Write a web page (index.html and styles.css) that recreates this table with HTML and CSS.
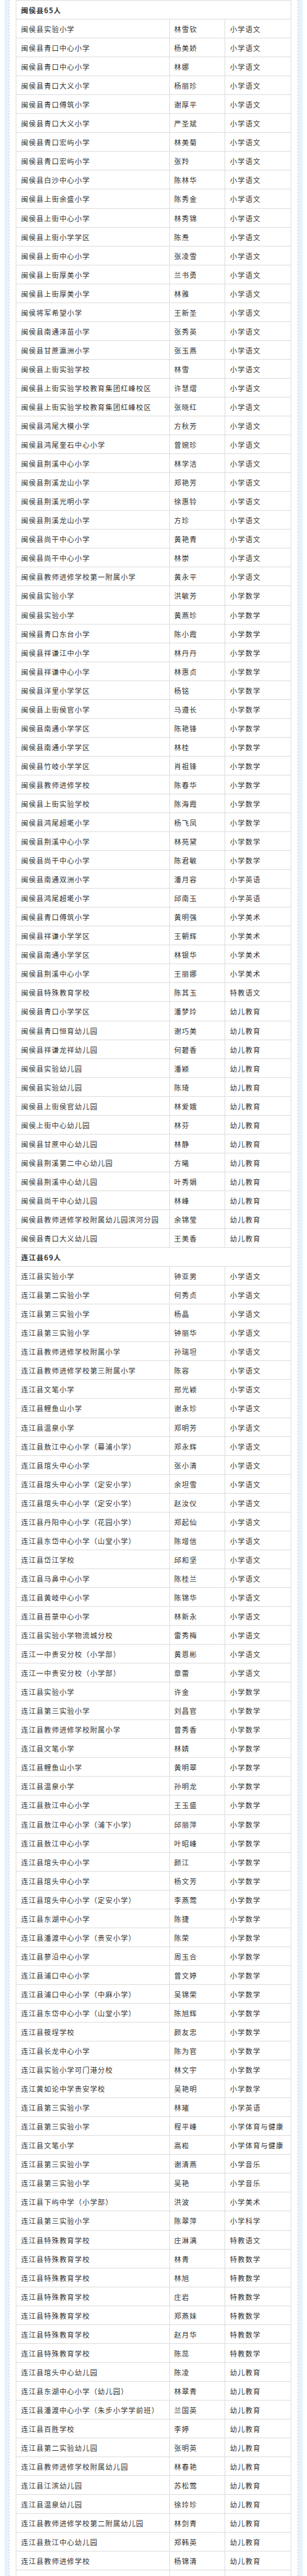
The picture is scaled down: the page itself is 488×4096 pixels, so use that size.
FILE: index.html
```html
<!DOCTYPE html>
<html lang="zh-CN">
<head>
<meta charset="utf-8">
<title>名单</title>
<link rel="stylesheet" href="styles.css">
</head>
<body>
<div class="page">
<div class="frame">
<div class="list">
<div class="row head"><div class="cell">闽侯县65人</div></div>
<div class="row"><div class="cell">闽侯县实验小学</div><div class="cell">林雪钦</div><div class="cell">小学语文</div></div>
<div class="row"><div class="cell">闽侯县青口中心小学</div><div class="cell">杨美娇</div><div class="cell">小学语文</div></div>
<div class="row"><div class="cell">闽侯县青口中心小学</div><div class="cell">林娜</div><div class="cell">小学语文</div></div>
<div class="row"><div class="cell">闽侯县青口大义小学</div><div class="cell">杨丽珍</div><div class="cell">小学语文</div></div>
<div class="row"><div class="cell">闽侯县青口傅筑小学</div><div class="cell">谢厚平</div><div class="cell">小学语文</div></div>
<div class="row"><div class="cell">闽侯县青口大义小学</div><div class="cell">严圣斌</div><div class="cell">小学语文</div></div>
<div class="row"><div class="cell">闽侯县青口宏屿小学</div><div class="cell">林美菊</div><div class="cell">小学语文</div></div>
<div class="row"><div class="cell">闽侯县青口宏屿小学</div><div class="cell">张羚</div><div class="cell">小学语文</div></div>
<div class="row"><div class="cell">闽侯县白沙中心小学</div><div class="cell">陈林华</div><div class="cell">小学语文</div></div>
<div class="row"><div class="cell">闽侯县上街余盛小学</div><div class="cell">陈秀金</div><div class="cell">小学语文</div></div>
<div class="row"><div class="cell">闽侯县上街中心小学</div><div class="cell">林秀锦</div><div class="cell">小学语文</div></div>
<div class="row"><div class="cell">闽侯县上街小学学区</div><div class="cell">陈焘</div><div class="cell">小学语文</div></div>
<div class="row"><div class="cell">闽侯县上街中心小学</div><div class="cell">张凌雪</div><div class="cell">小学语文</div></div>
<div class="row"><div class="cell">闽侯县上街厚美小学</div><div class="cell">兰书勇</div><div class="cell">小学语文</div></div>
<div class="row"><div class="cell">闽侯县上街厚美小学</div><div class="cell">林雅</div><div class="cell">小学语文</div></div>
<div class="row"><div class="cell">闽侯将军希望小学</div><div class="cell">王新圣</div><div class="cell">小学语文</div></div>
<div class="row"><div class="cell">闽侯县南通泽苗小学</div><div class="cell">张秀英</div><div class="cell">小学语文</div></div>
<div class="row"><div class="cell">闽侯县甘蔗瀛洲小学</div><div class="cell">张玉燕</div><div class="cell">小学语文</div></div>
<div class="row"><div class="cell">闽侯县上街实验学校</div><div class="cell">林雪</div><div class="cell">小学语文</div></div>
<div class="row"><div class="cell">闽侯县上街实验学校教育集团红峰校区</div><div class="cell">许慧熠</div><div class="cell">小学语文</div></div>
<div class="row"><div class="cell">闽侯县上街实验学校教育集团红峰校区</div><div class="cell">张晓红</div><div class="cell">小学语文</div></div>
<div class="row"><div class="cell">闽侯县鸿尾大模小学</div><div class="cell">方秋芳</div><div class="cell">小学语文</div></div>
<div class="row"><div class="cell">闽侯县鸿尾奎石中心小学</div><div class="cell">曾婉珍</div><div class="cell">小学语文</div></div>
<div class="row"><div class="cell">闽侯县荆溪中心小学</div><div class="cell">林学洁</div><div class="cell">小学语文</div></div>
<div class="row"><div class="cell">闽侯县荆溪龙山小学</div><div class="cell">郑艳芳</div><div class="cell">小学语文</div></div>
<div class="row"><div class="cell">闽侯县荆溪光明小学</div><div class="cell">徐惠铃</div><div class="cell">小学语文</div></div>
<div class="row"><div class="cell">闽侯县荆溪龙山小学</div><div class="cell">方珍</div><div class="cell">小学语文</div></div>
<div class="row"><div class="cell">闽侯县尚干中心小学</div><div class="cell">黄艳青</div><div class="cell">小学语文</div></div>
<div class="row"><div class="cell">闽侯县尚干中心小学</div><div class="cell">林崇</div><div class="cell">小学语文</div></div>
<div class="row"><div class="cell">闽侯县教师进修学校第一附属小学</div><div class="cell">黄永平</div><div class="cell">小学语文</div></div>
<div class="row"><div class="cell">闽侯县实验小学</div><div class="cell">洪敏芳</div><div class="cell">小学数学</div></div>
<div class="row"><div class="cell">闽侯县实验小学</div><div class="cell">黄燕珍</div><div class="cell">小学数学</div></div>
<div class="row"><div class="cell">闽候县青口东台小学</div><div class="cell">陈小霞</div><div class="cell">小学数学</div></div>
<div class="row"><div class="cell">闽侯县祥谦江中小学</div><div class="cell">林丹丹</div><div class="cell">小学数学</div></div>
<div class="row"><div class="cell">闽侯县祥谦中心小学</div><div class="cell">林惠贞</div><div class="cell">小学数学</div></div>
<div class="row"><div class="cell">闽侯县洋里小学学区</div><div class="cell">杨铭</div><div class="cell">小学数学</div></div>
<div class="row"><div class="cell">闽侯县上街侯官小学</div><div class="cell">马遵长</div><div class="cell">小学数学</div></div>
<div class="row"><div class="cell">闽侯县南通小学学区</div><div class="cell">陈艳锋</div><div class="cell">小学数学</div></div>
<div class="row"><div class="cell">闽侯县南通小学学区</div><div class="cell">林桂</div><div class="cell">小学数学</div></div>
<div class="row"><div class="cell">闽侯县竹岐小学学区</div><div class="cell">肖祖锋</div><div class="cell">小学数学</div></div>
<div class="row"><div class="cell">闽侯县教师进修学校</div><div class="cell">陈春华</div><div class="cell">小学数学</div></div>
<div class="row"><div class="cell">闽侯县上街实验学校</div><div class="cell">陈海霞</div><div class="cell">小学数学</div></div>
<div class="row"><div class="cell">闽侯县鸿尾超墘小学</div><div class="cell">杨飞凤</div><div class="cell">小学数学</div></div>
<div class="row"><div class="cell">闽侯县荆溪中心小学</div><div class="cell">林苑黛</div><div class="cell">小学数学</div></div>
<div class="row"><div class="cell">闽侯县尚干中心小学</div><div class="cell">陈君敏</div><div class="cell">小学数学</div></div>
<div class="row"><div class="cell">闽侯县南通双洲小学</div><div class="cell">潘月容</div><div class="cell">小学英语</div></div>
<div class="row"><div class="cell">闽侯县鸿尾超墘小学</div><div class="cell">邱南玉</div><div class="cell">小学英语</div></div>
<div class="row"><div class="cell">闽侯县青口傅筑小学</div><div class="cell">黄明强</div><div class="cell">小学美术</div></div>
<div class="row"><div class="cell">闽侯县祥谦小学学区</div><div class="cell">王朝辉</div><div class="cell">小学美术</div></div>
<div class="row"><div class="cell">闽侯县南通小学学区</div><div class="cell">林银华</div><div class="cell">小学美术</div></div>
<div class="row"><div class="cell">闽侯县荆溪中心小学</div><div class="cell">王丽娜</div><div class="cell">小学美术</div></div>
<div class="row"><div class="cell">闽侯县特殊教育学校</div><div class="cell">陈其玉</div><div class="cell">特教语文</div></div>
<div class="row"><div class="cell">闽侯县青口小学学区</div><div class="cell">潘梦玲</div><div class="cell">幼儿教育</div></div>
<div class="row"><div class="cell">闽侯县青口恒育幼儿园</div><div class="cell">谢巧美</div><div class="cell">幼儿教育</div></div>
<div class="row"><div class="cell">闽侯县祥谦龙祥幼儿园</div><div class="cell">何碧香</div><div class="cell">幼儿教育</div></div>
<div class="row"><div class="cell">闽侯县实验幼儿园</div><div class="cell">潘颖</div><div class="cell">幼儿教育</div></div>
<div class="row"><div class="cell">闽侯县实验幼儿园</div><div class="cell">陈琦</div><div class="cell">幼儿教育</div></div>
<div class="row"><div class="cell">闽侯县上街侯官幼儿园</div><div class="cell">林爱娥</div><div class="cell">幼儿教育</div></div>
<div class="row"><div class="cell">闽侯上街中心幼儿园</div><div class="cell">林芬</div><div class="cell">幼儿教育</div></div>
<div class="row"><div class="cell">闽侯县甘蔗中心幼儿园</div><div class="cell">林静</div><div class="cell">幼儿教育</div></div>
<div class="row"><div class="cell">闽侯县荆溪第二中心幼儿园</div><div class="cell">方曦</div><div class="cell">幼儿教育</div></div>
<div class="row"><div class="cell">闽侯县荆溪中心幼儿园</div><div class="cell">叶秀娟</div><div class="cell">幼儿教育</div></div>
<div class="row"><div class="cell">闽侯县尚干中心幼儿园</div><div class="cell">林峰</div><div class="cell">幼儿教育</div></div>
<div class="row"><div class="cell">闽侯县教师进修学校附属幼儿园滨河分园</div><div class="cell">余锦莹</div><div class="cell">幼儿教育</div></div>
<div class="row"><div class="cell">闽侯县青口大义幼儿园</div><div class="cell">王美香</div><div class="cell">幼儿教育</div></div>
<div class="row head"><div class="cell">连江县69人</div></div>
<div class="row"><div class="cell">连江县实验小学</div><div class="cell">钟亚男</div><div class="cell">小学语文</div></div>
<div class="row"><div class="cell">连江县第二实验小学</div><div class="cell">何秀贞</div><div class="cell">小学语文</div></div>
<div class="row"><div class="cell">连江县第三实验小学</div><div class="cell">杨晶</div><div class="cell">小学语文</div></div>
<div class="row"><div class="cell">连江县第三实验小学</div><div class="cell">钟丽华</div><div class="cell">小学语文</div></div>
<div class="row"><div class="cell">连江县教师进修学校附属小学</div><div class="cell">孙瑞坦</div><div class="cell">小学语文</div></div>
<div class="row"><div class="cell">连江县教师进修学校第三附属小学</div><div class="cell">陈容</div><div class="cell">小学语文</div></div>
<div class="row"><div class="cell">连江县文笔小学</div><div class="cell">邢光颖</div><div class="cell">小学语文</div></div>
<div class="row"><div class="cell">连江县鲤鱼山小学</div><div class="cell">谢永珍</div><div class="cell">小学语文</div></div>
<div class="row"><div class="cell">连江县温泉小学</div><div class="cell">郑明芳</div><div class="cell">小学语文</div></div>
<div class="row"><div class="cell">连江县敖江中心小学（幕浦小学）</div><div class="cell">郑永辉</div><div class="cell">小学语文</div></div>
<div class="row"><div class="cell">连江县琯头中心小学</div><div class="cell">张小清</div><div class="cell">小学语文</div></div>
<div class="row"><div class="cell">连江县琯头中心小学（定安小学）</div><div class="cell">余坦雪</div><div class="cell">小学语文</div></div>
<div class="row"><div class="cell">连江县琯头中心小学（定安小学）</div><div class="cell">赵汝仪</div><div class="cell">小学语文</div></div>
<div class="row"><div class="cell">连江县丹阳中心小学（花园小学）</div><div class="cell">郑起仙</div><div class="cell">小学语文</div></div>
<div class="row"><div class="cell">连江县东岱中心小学（山堂小学）</div><div class="cell">陈增信</div><div class="cell">小学语文</div></div>
<div class="row"><div class="cell">连江县岱江学校</div><div class="cell">邱和坚</div><div class="cell">小学语文</div></div>
<div class="row"><div class="cell">连江县马鼻中心小学</div><div class="cell">陈桂兰</div><div class="cell">小学语文</div></div>
<div class="row"><div class="cell">连江县黄岐中心小学</div><div class="cell">陈锦华</div><div class="cell">小学语文</div></div>
<div class="row"><div class="cell">连江县苔菉中心小学</div><div class="cell">林新永</div><div class="cell">小学语文</div></div>
<div class="row"><div class="cell">连江县实验小学物流城分校</div><div class="cell">雷秀梅</div><div class="cell">小学语文</div></div>
<div class="row"><div class="cell">连江一中贵安分校（小学部）</div><div class="cell">黄恩彬</div><div class="cell">小学语文</div></div>
<div class="row"><div class="cell">连江一中贵安分校（小学部）</div><div class="cell">章蕾</div><div class="cell">小学语文</div></div>
<div class="row"><div class="cell">连江县实验小学</div><div class="cell">许金</div><div class="cell">小学数学</div></div>
<div class="row"><div class="cell">连江县第三实验小学</div><div class="cell">刘昌官</div><div class="cell">小学数学</div></div>
<div class="row"><div class="cell">连江县教师进修学校附属小学</div><div class="cell">曾秀香</div><div class="cell">小学数学</div></div>
<div class="row"><div class="cell">连江县文笔小学</div><div class="cell">林婧</div><div class="cell">小学数学</div></div>
<div class="row"><div class="cell">连江县鲤鱼山小学</div><div class="cell">黄明翠</div><div class="cell">小学数学</div></div>
<div class="row"><div class="cell">连江县温泉小学</div><div class="cell">孙明龙</div><div class="cell">小学数学</div></div>
<div class="row"><div class="cell">连江县敖江中心小学</div><div class="cell">王玉盛</div><div class="cell">小学数学</div></div>
<div class="row"><div class="cell">连江县敖江中心小学（浦下小学）</div><div class="cell">邱丽萍</div><div class="cell">小学数学</div></div>
<div class="row"><div class="cell">连江县敖江中心小学</div><div class="cell">叶昭峰</div><div class="cell">小学数学</div></div>
<div class="row"><div class="cell">连江县琯头中心小学</div><div class="cell">颜江</div><div class="cell">小学数学</div></div>
<div class="row"><div class="cell">连江县琯头中心小学</div><div class="cell">杨文芳</div><div class="cell">小学数学</div></div>
<div class="row"><div class="cell">连江县琯头中心小学（定安小学）</div><div class="cell">李燕莺</div><div class="cell">小学数学</div></div>
<div class="row"><div class="cell">连江县东湖中心小学</div><div class="cell">陈捷</div><div class="cell">小学数学</div></div>
<div class="row"><div class="cell">连江县潘渡中心小学（贵安小学）</div><div class="cell">陈荣</div><div class="cell">小学数学</div></div>
<div class="row"><div class="cell">连江县蓼沿中心小学</div><div class="cell">周玉合</div><div class="cell">小学数学</div></div>
<div class="row"><div class="cell">连江县浦口中心小学</div><div class="cell">曾文婷</div><div class="cell">小学数学</div></div>
<div class="row"><div class="cell">连江县浦口中心小学（中麻小学）</div><div class="cell">吴锦荣</div><div class="cell">小学数学</div></div>
<div class="row"><div class="cell">连江县东岱中心小学（山堂小学）</div><div class="cell">陈旭辉</div><div class="cell">小学数学</div></div>
<div class="row"><div class="cell">连江县筱埕学校</div><div class="cell">颜友忠</div><div class="cell">小学数学</div></div>
<div class="row"><div class="cell">连江县长龙中心小学</div><div class="cell">陈为官</div><div class="cell">小学数学</div></div>
<div class="row"><div class="cell">连江县实验小学可门港分校</div><div class="cell">林文宇</div><div class="cell">小学数学</div></div>
<div class="row"><div class="cell">连江黄如论中学贵安学校</div><div class="cell">吴艳明</div><div class="cell">小学数学</div></div>
<div class="row"><div class="cell">连江县第三实验小学</div><div class="cell">林璀</div><div class="cell">小学英语</div></div>
<div class="row"><div class="cell">连江县第三实验小学</div><div class="cell">程平峰</div><div class="cell">小学体育与健康</div></div>
<div class="row"><div class="cell">连江县文笔小学</div><div class="cell">高崧</div><div class="cell">小学体育与健康</div></div>
<div class="row"><div class="cell">连江县第三实验小学</div><div class="cell">谢清燕</div><div class="cell">小学音乐</div></div>
<div class="row"><div class="cell">连江县第三实验小学</div><div class="cell">吴艳</div><div class="cell">小学音乐</div></div>
<div class="row"><div class="cell">连江县下屿中学（小学部）</div><div class="cell">洪波</div><div class="cell">小学美术</div></div>
<div class="row"><div class="cell">连江县第三实验小学</div><div class="cell">陈翠萍</div><div class="cell">小学科学</div></div>
<div class="row"><div class="cell">连江县特殊教育学校</div><div class="cell">庄淋漓</div><div class="cell">特教语文</div></div>
<div class="row"><div class="cell">连江县特殊教育学校</div><div class="cell">林青</div><div class="cell">特教数学</div></div>
<div class="row"><div class="cell">连江县特殊教育学校</div><div class="cell">林旭</div><div class="cell">特教数学</div></div>
<div class="row"><div class="cell">连江县特殊教育学校</div><div class="cell">庄岩</div><div class="cell">特教数学</div></div>
<div class="row"><div class="cell">连江县特殊教育学校</div><div class="cell">郑燕妹</div><div class="cell">特教数学</div></div>
<div class="row"><div class="cell">连江县特殊教育学校</div><div class="cell">赵月华</div><div class="cell">特教数学</div></div>
<div class="row"><div class="cell">连江县特殊教育学校</div><div class="cell">陈蕊</div><div class="cell">特教数学</div></div>
<div class="row"><div class="cell">连江县琯头中心幼儿园</div><div class="cell">陈凌</div><div class="cell">幼儿教育</div></div>
<div class="row"><div class="cell">连江县东湖中心小学（幼儿园）</div><div class="cell">林翠青</div><div class="cell">幼儿教育</div></div>
<div class="row"><div class="cell">连江县潘渡中心小学（朱步小学学前班）</div><div class="cell">兰国英</div><div class="cell">幼儿教育</div></div>
<div class="row"><div class="cell">连江县百胜学校</div><div class="cell">李婷</div><div class="cell">幼儿教育</div></div>
<div class="row"><div class="cell">连江县第二实验幼儿园</div><div class="cell">张明英</div><div class="cell">幼儿教育</div></div>
<div class="row"><div class="cell">连江县教师进修学校附属幼儿园</div><div class="cell">林春艳</div><div class="cell">幼儿教育</div></div>
<div class="row"><div class="cell">连江县江滨幼儿园</div><div class="cell">苏松莺</div><div class="cell">幼儿教育</div></div>
<div class="row"><div class="cell">连江县温泉幼儿园</div><div class="cell">徐玲珍</div><div class="cell">幼儿教育</div></div>
<div class="row"><div class="cell">连江县教师进修学校第二附属幼儿园</div><div class="cell">林剑青</div><div class="cell">幼儿教育</div></div>
<div class="row"><div class="cell">连江县敖江中心幼儿园</div><div class="cell">郑韩英</div><div class="cell">幼儿教育</div></div>
<div class="row"><div class="cell">连江县教师进修学校</div><div class="cell">杨锦清</div><div class="cell">幼儿教育</div></div>
<div class="row"><div class="cell">&nbsp;</div><div class="cell">&nbsp;</div><div class="cell">&nbsp;</div></div>
</div>
</div>
</div>
</body>
</html>
```

FILE: styles.css
```css
html, body {
  margin: 0;
  padding: 0;
  background: #ffffff;
}

body {
  font-family: "Noto Sans CJK SC", "Liberation Sans", sans-serif;
  color: #333333;
}

.page {
  margin: 0 7px;
  padding: 0 7px;
  background: #e4f3fd;
  height: 4096px;
  overflow: hidden;
}

.frame {
  height: 100%;
  box-sizing: border-box;
  padding: 0 10.3px;
  background: #ffffff;
  border-left: 1px dashed #f6c3d0;
  border-right: 1px dashed #f6c3d0;
}

.list {
  border-top: 1px solid #dddddd;
  border-left: 1px solid #dddddd;
  border-right: 1px solid #dddddd;
}

.row {
  display: grid;
  grid-template-columns: 242.3px 88.8px 1fr;
  height: 30.057px;
  box-sizing: border-box;
  border-bottom: 1px solid #dddddd;
}

.row.head {
  display: block;
}

.cell {
  padding-left: 7.2px;
  font-size: 11.2px;
  letter-spacing: 1px;
  line-height: 30px;
  white-space: nowrap;
  overflow: hidden;
}

.cell + .cell {
  border-left: 1px solid #dddddd;
}

.head .cell {
  font-weight: bold;
}
```
